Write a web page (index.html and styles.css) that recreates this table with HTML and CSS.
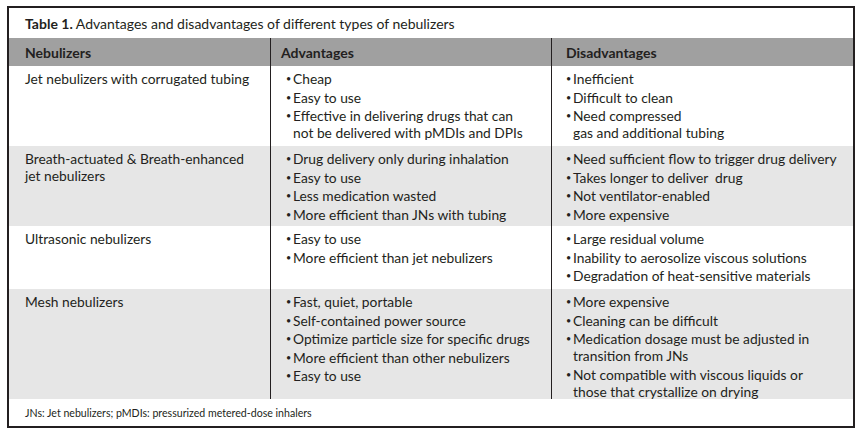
FILE: index.html
```html
<!DOCTYPE html>
<html lang="en">
<head>
<meta charset="utf-8">
<title>Table 1</title>
<link rel="stylesheet" href="styles.css">
</head>
<body>
<div class="frame">
  <div class="title"><b>Table 1.</b>&nbsp;Advantages and disadvantages of different types of nebulizers</div>
  <div class="table">
    <div class="cell head c1">Nebulizers</div>
    <div class="cell head c2">Advantages</div>
    <div class="cell head c3">Disadvantages</div>

    <div class="cell c1">Jet nebulizers with corrugated tubing</div>
    <div class="cell c2"><ul>
      <li>Cheap</li>
      <li>Easy to use</li>
      <li><span>Effective in delivering drugs that can<br>not be delivered with pMDIs and DPIs</span></li>
    </ul></div>
    <div class="cell c3"><ul>
      <li>Inefficient</li>
      <li>Difficult to clean</li>
      <li><span>Need compressed<br>gas and additional tubing</span></li>
    </ul></div>

    <div class="cell c1 alt">Breath-actuated &amp; Breath-enhanced<br>jet nebulizers</div>
    <div class="cell c2 alt"><ul>
      <li>Drug delivery only during inhalation</li>
      <li>Easy to use</li>
      <li>Less medication wasted</li>
      <li>More efficient than JNs with tubing</li>
    </ul></div>
    <div class="cell c3 alt"><ul>
      <li>Need sufficient flow to trigger drug delivery</li>
      <li>Takes longer to deliver&nbsp; drug</li>
      <li>Not ventilator-enabled</li>
      <li>More expensive</li>
    </ul></div>

    <div class="cell c1">Ultrasonic nebulizers</div>
    <div class="cell c2"><ul>
      <li>Easy to use</li>
      <li>More efficient than jet nebulizers</li>
    </ul></div>
    <div class="cell c3"><ul>
      <li>Large residual volume</li>
      <li>Inability to aerosolize viscous solutions</li>
      <li>Degradation of heat-sensitive materials</li>
    </ul></div>

    <div class="cell c1 alt">Mesh nebulizers</div>
    <div class="cell c2 alt"><ul>
      <li>Fast, quiet, portable</li>
      <li>Self-contained power source</li>
      <li>Optimize particle size for specific drugs</li>
      <li>More efficient than other nebulizers</li>
      <li>Easy to use</li>
    </ul></div>
    <div class="cell c3 alt"><ul>
      <li>More expensive</li>
      <li>Cleaning can be difficult</li>
      <li><span>Medication dosage must be adjusted in<br>transition from JNs</span></li>
      <li><span>Not compatible with viscous liquids or<br>those that crystallize on drying</span></li>
    </ul></div>
  </div>
  <div class="foot">JNs: Jet nebulizers; pMDIs: pressurized metered-dose inhalers</div>
</div>
</body>
</html>
```

FILE: styles.css
```css
html, body {
  margin: 0;
  padding: 0;
  background: #ffffff;
}
body {
  font-family: Lato, "Open Sans", sans-serif;
  color: #231f20;
}
.frame {
  margin: 6px 0 0 7px;
  width: 844px;
  height: 418px;
  border: 2px solid #231f20;
  display: flex;
  flex-direction: column;
}
.title {
  height: 30px;
  padding-left: 16px;
  display: flex;
  align-items: center;
  font-size: 14px;
}
.title b { font-weight: 700; }
.table {
  display: grid;
  grid-template-columns: 262px 281px 1fr;
  grid-template-rows: 28px 80px 80px 63px 110px;
}
.cell {
  font-size: 13.8px;
  line-height: 17px;
  padding-top: 4px;
}
.c1 { border-right: 1px solid #231f20; padding-left: 16px; padding-right: 6px; }
.c2 { border-right: 1px solid #231f20; padding-left: 15px; padding-right: 4px; }
.c3 { padding-left: 14px; padding-right: 4px; }
.head {
  background: #a0a0a0;
  font-weight: 700;
  font-size: 14px;
  padding-top: 0;
  display: flex;
  align-items: center;
}
.head.c2 { padding-left: 10px; }
.alt { background: #e6e6e6; }
ul {
  list-style: none;
  margin: 0;
  padding: 0;
}
li {
  display: flex;
  white-space: nowrap;
  margin-bottom: 1.5px;
}
li::before {
  content: "\2022";
  flex: none;
  width: 7px;
  font-size: 9px;
}
.foot {
  flex: 1;
  display: flex;
  align-items: center;
  padding-left: 16px;
  font-size: 10.6px;
}
```
